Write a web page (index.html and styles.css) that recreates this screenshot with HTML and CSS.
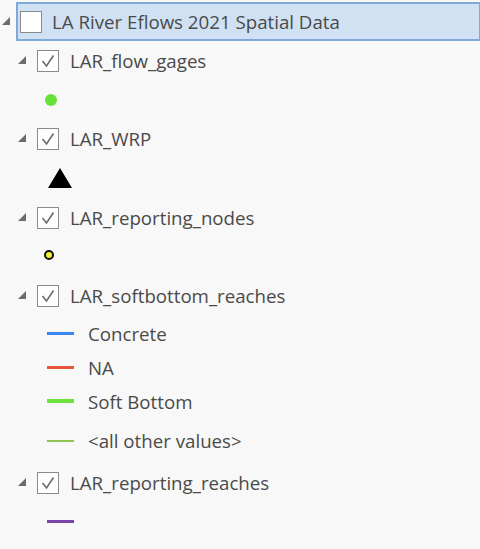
FILE: index.html
```html
<!DOCTYPE html>
<html>
<head>
<meta charset="utf-8">
<link rel="stylesheet" href="styles.css">
</head>
<body>
<div class="tree">
  <div class="row header">
    <span class="exp exp-root"><svg width="9" height="9" viewBox="0 0 9 9"><polygon points="8,0 8,8 0,8" fill="#6b6b6b"/></svg></span>
    <div class="groupbox">
      <span class="cb"></span>
      <span class="label">LA River Eflows 2021 Spatial Data</span>
    </div>
  </div>

  <div class="row layer">
    <span class="exp"><svg width="9" height="9" viewBox="0 0 9 9"><polygon points="8,0 8,8 0,8" fill="#6b6b6b"/></svg></span>
    <span class="cb checked"><svg width="20" height="20" viewBox="0 0 20 20"><polyline points="4.5,10 8.5,15 15.5,4.5" fill="none" stroke="#6a6a6a" stroke-width="1.6"/></svg></span>
    <span class="label">LAR_flow_gages</span>
  </div>
  <div class="row sym">
    <span class="dot green"></span>
  </div>

  <div class="row layer">
    <span class="exp"><svg width="9" height="9" viewBox="0 0 9 9"><polygon points="8,0 8,8 0,8" fill="#6b6b6b"/></svg></span>
    <span class="cb checked"><svg width="20" height="20" viewBox="0 0 20 20"><polyline points="4.5,10 8.5,15 15.5,4.5" fill="none" stroke="#6a6a6a" stroke-width="1.6"/></svg></span>
    <span class="label">LAR_WRP</span>
  </div>
  <div class="row sym sym-tri">
    <svg class="tri" width="26" height="22" viewBox="0 0 26 22"><polygon points="13,1 25,21 1,21" fill="#000"/></svg>
  </div>

  <div class="row layer">
    <span class="exp"><svg width="9" height="9" viewBox="0 0 9 9"><polygon points="8,0 8,8 0,8" fill="#6b6b6b"/></svg></span>
    <span class="cb checked"><svg width="20" height="20" viewBox="0 0 20 20"><polyline points="4.5,10 8.5,15 15.5,4.5" fill="none" stroke="#6a6a6a" stroke-width="1.6"/></svg></span>
    <span class="label">LAR_reporting_nodes</span>
  </div>
  <div class="row sym">
    <span class="dot yellow"></span>
  </div>

  <div class="row layer">
    <span class="exp"><svg width="9" height="9" viewBox="0 0 9 9"><polygon points="8,0 8,8 0,8" fill="#6b6b6b"/></svg></span>
    <span class="cb checked"><svg width="20" height="20" viewBox="0 0 20 20"><polyline points="4.5,10 8.5,15 15.5,4.5" fill="none" stroke="#6a6a6a" stroke-width="1.6"/></svg></span>
    <span class="label">LAR_softbottom_reaches</span>
  </div>
  <div class="row legend l-concrete">
    <span class="line blue"></span><span class="label">Concrete</span>
  </div>
  <div class="row legend l-na">
    <span class="line red"></span><span class="label">NA</span>
  </div>
  <div class="row legend l-soft">
    <span class="line green"></span><span class="label">Soft Bottom</span>
  </div>
  <div class="row legend l-other">
    <span class="line olive"></span><span class="label">&lt;all other values&gt;</span>
  </div>

  <div class="row layer">
    <span class="exp"><svg width="9" height="9" viewBox="0 0 9 9"><polygon points="8,0 8,8 0,8" fill="#6b6b6b"/></svg></span>
    <span class="cb checked"><svg width="20" height="20" viewBox="0 0 20 20"><polyline points="4.5,10 8.5,15 15.5,4.5" fill="none" stroke="#6a6a6a" stroke-width="1.6"/></svg></span>
    <span class="label">LAR_reporting_reaches</span>
  </div>
  <div class="row sym">
    <span class="line purple"></span>
  </div>
</div>
</body>
</html>
```

FILE: styles.css
```css
html, body {
  margin: 0;
  padding: 0;
  background: #f8f8f8;
}
body {
  width: 480px;
  height: 549px;
  overflow: hidden;
  font-family: "Open Sans", "Noto Sans", sans-serif;
  font-size: 18.7px;
  color: #4a4a4a;
}
.tree {
  display: flex;
  flex-direction: column;
  padding-top: 2px;
}
.row {
  display: flex;
  align-items: center;
  height: 39px;
  box-sizing: border-box;
}
.header {
  height: 39px;
}
.exp {
  display: flex;
  align-items: center;
  width: 9px;
  height: 9px;
}
.exp-root {
  margin-left: 2px;
  margin-right: 5px;
}
.groupbox {
  flex: 1;
  height: 39px;
  box-sizing: border-box;
  display: flex;
  align-items: center;
  background: #cfe1f3;
  border: 2px solid #80aad6;
  border-right-width: 1px;
  padding-left: 2px;
}
.groupbox .label {
  margin-left: 10px;
}
.cb {
  width: 22px;
  height: 22px;
  box-sizing: border-box;
  border: 1.5px solid #8a8a8a;
  background: #ffffff;
  display: flex;
  align-items: center;
  justify-content: center;
}
.layer .exp {
  margin-left: 18px;
  margin-right: 10px;
}
.layer .cb {
  margin-right: 11px;
}
.sym .dot, .sym .line, .sym .tri, .legend .line {
  flex: none;
}
.dot.green {
  width: 12px;
  height: 12px;
  border-radius: 50%;
  background: #66e23b;
  margin-left: 45px;
}
.dot.yellow {
  width: 6px;
  height: 6px;
  border-radius: 50%;
  background: #f4f03a;
  border: 2px solid #111;
  margin-left: 44px;
  margin-top: -3px;
}
.sym-tri {
  height: 40px;
}
.tri {
  margin-left: 47px;
}
.line {
  width: 27px;
  height: 3px;
  margin-left: 47px;
}
.legend .label {
  margin-left: 14px;
}
.l-concrete { height: 36px; }
.l-na { height: 33px; }
.l-soft { height: 34px; }
.l-other { height: 45px; }
.line.blue { background: #3d84f2; }
.line.red { background: #ea563a; }
.line.green { background: #6ee03f; height: 4px; }
.line.olive { background: #8fc453; height: 2px; }
.line.purple { background: #7c45a9; }
```
